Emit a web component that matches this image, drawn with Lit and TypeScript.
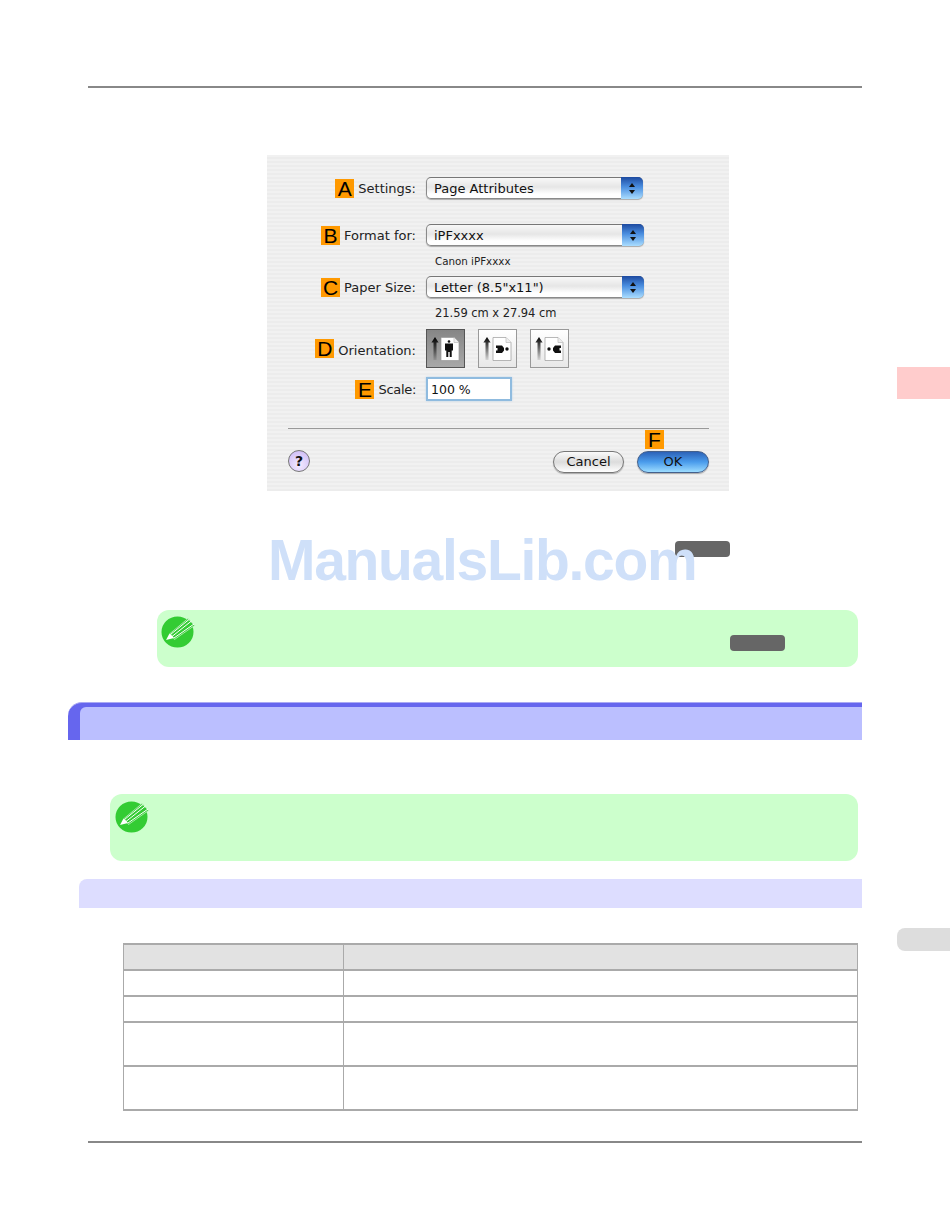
import { LitElement, html, css, svg } from 'lit'
import { customElement } from 'lit/decorators.js'

const pageIcon = (person: unknown) => svg`
  <defs>
    <linearGradient id="shaft" x1="0" y1="0" x2="0" y2="1">
      <stop offset="0" stop-color="#000" />
      <stop offset="1" stop-color="#000" stop-opacity="0.1" />
    </linearGradient>
  </defs>
  <path d="M9 8l3.600 5.500h-2.100v17.500h-3v-17.500h-2.100z" fill="url(#shaft)" />
  <path d="M15 8.500h13l5 5v18h-18z" fill="#fff" stroke="#999" stroke-width="0.700" />
  <path d="M28 8.500v5h5" fill="#eee" stroke="#bbb" stroke-width="0.700" />
  ${person}
`

const portrait = svg`
  <circle cx="23" cy="12.500" r="1.300" fill="#111" />
  <path d="M19 14.500h8v7h-1.300v6.500h-2v-5h-1.400v5h-2v-6.500h-1.300z" fill="#111" />
`
const bodyLeft = svg`
  <circle cx="29" cy="20" r="1.700" fill="#111" />
  <path d="M18 16.500h6l2 2.500v2.500l-2 2.500h-6v-2.500h1.500v-2.500h-1.500z" fill="#111" />
`
const bodyRight = svg`
  <circle cx="19" cy="20" r="1.700" fill="#111" />
  <path d="M31 16.500h-6l-2 2.500v2.500l2 2.500h6v-2.500h-1.500v-2.500h1.500z" fill="#111" />
`

const noteIcon = html`
  <svg class="note-icon" viewBox="0 0 36 34" width="36" height="34">
    <ellipse cx="16.500" cy="16" rx="16" ry="15.500" fill="#33cc33" />
    <path d="M9 17.500l18-15 6.500 7-20 14z" fill="#33cc33" stroke="#bfeebf" stroke-width="0.800" />
    <path d="M9.500 18.500l18.500-15M11 20.500l19.500-15.500M13 22l20-14" stroke="#fff" stroke-width="1" fill="none" />
    <path d="M5 24l3.500-6.500 4.500 4.500z" fill="#fff" />
  </svg>
`

@customElement('app-root')
export class AppRoot extends LitElement {
  static styles = css`
    :host {
      display: block;
    }
    .page {
      position: relative;
      width: 950px;
      height: 1229px;
      overflow: hidden;
      display: flex;
      flex-direction: column;
      align-items: flex-start;
      background: #fff;
      font-family: 'DejaVu Sans', sans-serif;
    }
    .rule {
      margin-left: 88px;
      width: 774px;
      height: 2px;
      background: #888;
    }
    .rule.top {
      margin-top: 86px;
    }
    .rule.bottom {
      margin-top: 30px;
    }

    .dialog {
      margin-top: 67px;
      margin-left: 267px;
      width: 462px;
      height: 336px;
      display: flex;
      flex-direction: column;
      color: #222;
      font-size: 13px;
      background: repeating-linear-gradient(#f1f1f1 0 2px, #ececec 2px 4px);
    }
    .row {
      display: flex;
      align-items: center;
      gap: 10px;
    }
    .label {
      width: 149px;
      display: flex;
      justify-content: flex-end;
      align-items: center;
      gap: 4px;
      white-space: nowrap;
    }
    .tag {
      width: 19px;
      height: 19px;
      background: #ff9900;
      color: #000;
      font: 21px/19px 'Liberation Sans', sans-serif;
      text-align: center;
      flex: none;
    }
    .select {
      position: relative;
      box-sizing: border-box;
      width: 218px;
      height: 22px;
      padding-left: 7px;
      border: 1px solid #8a8a8a;
      border-top-color: #777;
      border-radius: 5px;
      line-height: 22px;
      color: #111;
      background: linear-gradient(#f8f8f8, #e6e6e6 45%, #fff 80%);
      box-shadow: 0 1px 1px #aaa;
    }
    .stepper {
      position: absolute;
      top: -1px;
      right: -1px;
      bottom: -1px;
      width: 22px;
      border-radius: 0 5px 5px 0;
      background: linear-gradient(#1d4aa0, #4a8ee0 45%, #aaddff);
      display: flex;
      flex-direction: column;
      align-items: center;
      justify-content: center;
      gap: 3px;
    }
    .up,
    .down {
      width: 0;
      height: 0;
      border-left: 3px solid transparent;
      border-right: 3px solid transparent;
    }
    .up {
      border-bottom: 4px solid #111;
    }
    .down {
      border-top: 4px solid #111;
    }
    .sub {
      margin-left: 168px;
      font-size: 11.500px;
      line-height: 14px;
      letter-spacing: -0.05px;
      color: #222;
    }
    .row.a {
      margin-top: 22px;
    }
    .row.a .select {
      width: 217px;
    }
    .row.b {
      margin-top: 25px;
    }
    .sub.canon {
      margin-top: 8px;
      font-size: 10.300px;
      letter-spacing: 0;
    }
    .row.c {
      margin-top: 8px;
    }
    .sub.size {
      margin-top: 8px;
    }
    .row.d {
      margin-top: 9px;
    }
    .row.d .text {
      margin-top: 3px;
    }
    .row.e {
      margin-top: 9px;
    }
    .row.e .text {
      letter-spacing: -0.3px;
    }
    .icons {
      display: flex;
      gap: 13px;
    }
    .orient {
      box-sizing: border-box;
      width: 39px;
      height: 39px;
      border: 1px solid #999;
      background: linear-gradient(#fff, #e8e8e8);
    }
    .orient.on {
      border-color: #555;
      background: linear-gradient(#868686, #a8a8a8);
    }
    .orient svg {
      display: block;
      margin: -1px;
    }
    .input {
      box-sizing: border-box;
      width: 86px;
      height: 24px;
      padding-left: 3px;
      line-height: 21px;
      font-size: 12.500px;
      color: #111;
      background: #fff;
      border: 2px solid #8fbbdf;
      box-shadow: 0 0 2px #b9d3ea;
    }
    .sep {
      margin-top: 27px;
      margin-left: 21px;
      width: 421px;
      height: 1px;
      background: #999;
    }
    .actions {
      position: relative;
      margin-top: 21px;
      margin-left: 21px;
      width: 421px;
      height: 24px;
      display: flex;
      align-items: center;
    }
    .help {
      box-sizing: border-box;
      width: 22px;
      height: 22px;
      margin-top: -2px;
      border-radius: 50%;
      border: 1px solid #777;
      background: radial-gradient(circle at 50% 70%, #f4ecff, #c8b4f4);
      color: #111;
      font: bold 14px/20px 'DejaVu Sans', sans-serif;
      text-align: center;
    }
    .btn {
      box-sizing: border-box;
      height: 22px;
      border-radius: 11px;
      border: 1px solid #777;
      text-align: center;
      line-height: 19px;
      color: #111;
      box-shadow: 0 1px 1px #aaa;
    }
    .btn.cancel {
      margin-left: auto;
      width: 71px;
      background: linear-gradient(#fafafa, #dcdcdc 50%, #fff);
    }
    .btn.ok {
      margin-left: 13px;
      width: 72px;
      border-color: #44608c;
      background: linear-gradient(#2c62b8, #4a9cec 50%, #9cdcff);
    }
    .tag.f {
      position: absolute;
      right: 45px;
      top: -20px;
    }

    .para {
      margin-top: 50px;
      padding-left: 675px;
      height: 16px;
    }
    .link {
      display: block;
      width: 55px;
      height: 16px;
      border-radius: 4px;
      background: #666;
    }
    .watermark {
      position: absolute;
      left: 268px;
      top: 527px;
      font: bold 57px/66px 'Liberation Sans', sans-serif;
      letter-spacing: -1.3px;
      color: #cfe0f9;
      white-space: nowrap;
    }
    .note {
      box-sizing: border-box;
      display: flex;
      align-items: flex-start;
      background: #ccffcc;
      border-radius: 12px;
      padding: 6px 0 0 4px;
    }
    .note-icon {
      display: block;
      flex: none;
    }
    .note.one {
      margin-top: 53px;
      margin-left: 157px;
      width: 701px;
      height: 57px;
    }
    .note.one .link {
      margin-top: 19px;
      margin-left: 533px;
    }
    .note.two {
      margin-top: 54px;
      margin-left: 110px;
      width: 748px;
      height: 67px;
      padding: 7px 0 0 5px;
    }
    .heading {
      box-sizing: border-box;
      margin-top: 35px;
      margin-left: 68px;
      width: 794px;
      height: 38px;
      padding: 4px 0 0 12px;
      background: #6666ee;
      border-top: 1px solid #aaaaf4;
      border-top-left-radius: 14px;
    }
    .heading div {
      height: 100%;
      background: #bbbfff;
      border-top-left-radius: 6px;
    }
    .subheading {
      margin-top: 18px;
      margin-left: 79px;
      width: 783px;
      height: 29px;
      background: #ddddff;
      border-top-left-radius: 8px;
    }
    table {
      margin-top: 35px;
      margin-left: 123px;
      width: 735px;
      border-collapse: collapse;
      table-layout: fixed;
    }
    th,
    td {
      padding: 0;
      border-top: 2px solid #aaa;
      border-bottom: 2px solid #aaa;
      border-left: 1px solid #aaa;
      border-right: 1px solid #aaa;
      height: 24px;
    }
    th {
      background: #e2e2e2;
    }
    tr.tall td {
      height: 42px;
    }
    .col-a {
      width: 219px;
    }

    .tab {
      position: absolute;
      left: 897px;
      right: 0;
    }
    .tab.pink {
      top: 367px;
      height: 32px;
      background: #ffcccc;
    }
    .tab.gray {
      top: 928px;
      height: 23px;
      background: #dddddd;
      border-radius: 8px 0 0 8px;
    }
  `

  private select(text: string) {
    return html`
      <div class="select">
        ${text}
        <span class="stepper"><span class="up"></span><span class="down"></span></span>
      </div>
    `
  }

  private orient(person: unknown, on = false) {
    return html`
      <div class="orient ${on ? 'on' : ''}">
        <svg viewBox="0 0 39 39" width="39" height="39">${pageIcon(person)}</svg>
      </div>
    `
  }

  render() {
    return html`
      <div class="page">
        <div class="rule top"></div>

        <div class="dialog">
          <div class="row a">
            <div class="label"><span class="tag">A</span><span class="text">Settings:</span></div>
            ${this.select('Page Attributes')}
          </div>
          <div class="row b">
            <div class="label"><span class="tag">B</span><span class="text">Format for:</span></div>
            ${this.select('iPFxxxx')}
          </div>
          <div class="sub canon">Canon iPFxxxx</div>
          <div class="row c">
            <div class="label"><span class="tag">C</span><span class="text">Paper Size:</span></div>
            ${this.select('Letter (8.5"x11")')}
          </div>
          <div class="sub size">21.59 cm x 27.94 cm</div>
          <div class="row d">
            <div class="label"><span class="tag">D</span><span class="text">Orientation:</span></div>
            <div class="icons">
              ${this.orient(portrait, true)} ${this.orient(bodyLeft)} ${this.orient(bodyRight)}
            </div>
          </div>
          <div class="row e">
            <div class="label"><span class="tag">E</span><span class="text">Scale:</span></div>
            <div class="input">100 %</div>
          </div>
          <div class="sep"></div>
          <div class="actions">
            <div class="help">?</div>
            <span class="tag f">F</span>
            <div class="btn cancel">Cancel</div>
            <div class="btn ok">OK</div>
          </div>
        </div>

        <div class="para"><span class="link"></span></div>

        <div class="note one">${noteIcon}<span class="link"></span></div>

        <div class="heading"><div></div></div>

        <div class="note two">${noteIcon}</div>

        <div class="subheading"></div>

        <table>
          <tr><th class="col-a"></th><th></th></tr>
          <tr><td></td><td></td></tr>
          <tr><td></td><td></td></tr>
          <tr class="tall"><td></td><td></td></tr>
          <tr class="tall"><td></td><td></td></tr>
        </table>

        <div class="rule bottom"></div>

        <div class="watermark">ManualsLib.com</div>
        <div class="tab pink"></div>
        <div class="tab gray"></div>
      </div>
    `
  }
}

declare global {
  interface HTMLElementTagNameMap {
    'app-root': AppRoot
  }
}
